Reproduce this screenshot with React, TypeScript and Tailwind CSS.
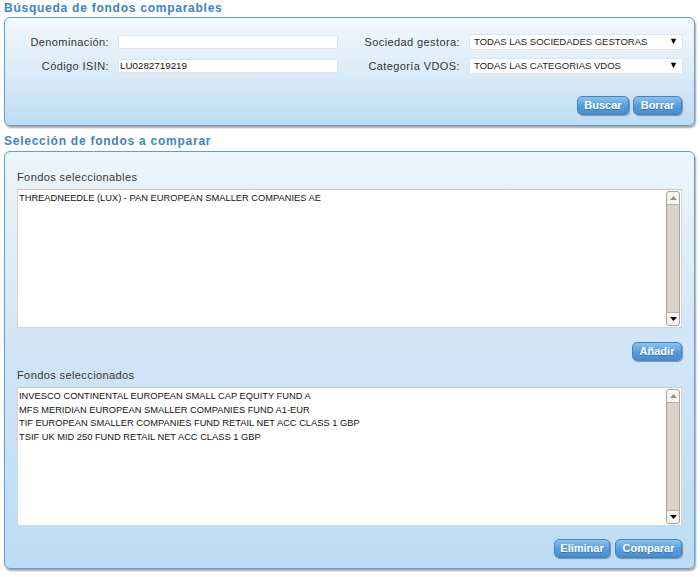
import React from "react";

const font = "font-['Liberation_Sans',Arial,sans-serif]";

function Btn({ label, w }: { label: string; w: string }) {
  return (
    <button
      className={`${w} h-[19px] rounded-[5px] border border-[#3f84c4] bg-[linear-gradient(180deg,#8cc2ec_0%,#5a9fdb_50%,#468ed0_100%)] text-[11px] font-bold tracking-normal text-white [text-shadow:0_1px_0_rgba(30,80,140,0.5)] shadow-[1px_1px_1px_rgba(0,0,0,0.35)]`}
    >
      {label}
    </button>
  );
}

function Select({ value }: { value: string }) {
  return (
    <div className="flex h-[16px] w-[214px] items-center justify-between border border-[#dde6ee] bg-white pl-[4px] pr-[4px] text-[9.5px] tracking-normal text-[#222]">
      <span>{value}</span>
      <span className="text-[9px] text-black">▼</span>
    </div>
  );
}

function ListBox({ items }: { items: string[] }) {
  return (
    <div className="flex h-[139px] w-[665px] border border-[#d4d4d4] border-t-[#c8c8c8] bg-white">
      <div className="flex-1 px-[1px] pt-[2px] text-[9.3px] leading-[13.5px] tracking-normal text-[#111]">
        {items.map((it) => (
          <div key={it}>{it}</div>
        ))}
      </div>
      <div className="my-[1px] mr-[1px] flex w-[14px] flex-col rounded-[3px] border border-[#a9a49a] bg-[#d9d3c8]">
        <div className="flex h-[13px] items-center justify-center rounded-t-[3px] border-b border-[#b8b2a6] bg-[#f7f5f1]">
          <svg width="7" height="4" viewBox="0 0 7 4">
            <path d="M0 4 L3.5 0 L7 4 Z" fill="#9a968d" />
          </svg>
        </div>
        <div className="flex-1" />
        <div className="flex h-[13px] items-center justify-center rounded-b-[3px] border-t border-[#b8b2a6] bg-[#f7f5f1]">
          <svg width="7" height="4" viewBox="0 0 7 4">
            <path d="M0 0 L7 0 L3.5 4 Z" fill="#000" />
          </svg>
        </div>
      </div>
    </div>
  );
}

function Title({ children }: { children: React.ReactNode }) {
  return (
    <div className="pl-[4px] text-[12px] font-bold leading-[15px] tracking-[0.75px] text-[#3a85c6]">
      {children}
    </div>
  );
}

export default function App() {
  return (
    <div className={`${font} h-[577px] w-[700px] bg-white text-[#333]`}>
      <div className="pt-[1px]">
        <Title>Búsqueda de fondos comparables</Title>
      </div>
      <section className="ml-[4px] mt-[1px] w-[691px] rounded-[6px] border border-[#5e9dd3] bg-[linear-gradient(180deg,#f3f8fd_0%,#dcebf8_50%,#bcdcf3_100%)] pb-[10px] pt-[12px] shadow-[1px_2px_2px_rgba(0,0,0,0.35)]">
        <div className="flex text-[11px] tracking-[0.4px]">
          <div className="flex flex-col">
            <div className="flex h-[24px] items-center">
              <span className="w-[104px] text-right">Denominación:</span>
              <div className="ml-[9px] h-[14px] w-[220px] border border-[#dde6ee] bg-white" />
            </div>
            <div className="flex h-[24px] items-center">
              <span className="w-[104px] text-right">Código ISIN:</span>
              <div className="ml-[9px] flex h-[14px] w-[220px] items-center border border-[#dde6ee] bg-white pl-[1px] text-[9.8px] tracking-normal text-[#111]">
                LU0282719219
              </div>
            </div>
          </div>
          <div className="ml-[3px] flex flex-col">
            <div className="flex h-[24px] items-center">
              <span className="w-[119px] text-right">Sociedad gestora:</span>
              <div className="ml-[9px]">
                <Select value="TODAS LAS SOCIEDADES GESTORAS" />
              </div>
            </div>
            <div className="flex h-[24px] items-center">
              <span className="w-[119px] text-right">Categoría VDOS:</span>
              <div className="ml-[9px]">
                <Select value="TODAS LAS CATEGORIAS VDOS" />
              </div>
            </div>
          </div>
        </div>
        <div className="mt-[18px] flex justify-end gap-[4px] pr-[12px]">
          <Btn label="Buscar" w="w-[52px]" />
          <Btn label="Borrar" w="w-[49px]" />
        </div>
      </section>

      <div className="pt-[8px]">
        <Title>Selección de fondos a comparar</Title>
      </div>
      <section className="ml-[4px] mt-[2px] w-[691px] rounded-[6px] border border-[#5e9dd3] bg-[linear-gradient(180deg,#edf5fc_0%,#d2e6f7_45%,#bcdcf3_100%)] pb-[10px] pl-[12px] pr-[8px] pt-[18px] text-[11px] tracking-[0.4px] shadow-[1px_2px_2px_rgba(0,0,0,0.35)]">
        <div className="leading-[14px]">Fondos seleccionables</div>
        <div className="mt-[5px]">
          <ListBox items={["THREADNEEDLE (LUX) - PAN EUROPEAN SMALLER COMPANIES AE"]} />
        </div>
        <div className="mt-[14px] flex justify-end pr-[4px]">
          <Btn label="Añadir" w="w-[50px]" />
        </div>
        <div className="mt-[7px] leading-[14px]">Fondos seleccionados</div>
        <div className="mt-[5px]">
          <ListBox
            items={[
              "INVESCO CONTINENTAL EUROPEAN SMALL CAP EQUITY FUND A",
              "MFS MERIDIAN EUROPEAN SMALLER COMPANIES FUND A1-EUR",
              "TIF EUROPEAN SMALLER COMPANIES FUND RETAIL NET ACC CLASS 1 GBP",
              "TSIF UK MID 250 FUND RETAIL NET ACC CLASS 1 GBP",
            ]}
          />
        </div>
        <div className="mt-[13px] flex justify-end gap-[5px] pr-[4px]">
          <Btn label="Eliminar" w="w-[56px]" />
          <Btn label="Comparar" w="w-[67px]" />
        </div>
      </section>
    </div>
  );
}
